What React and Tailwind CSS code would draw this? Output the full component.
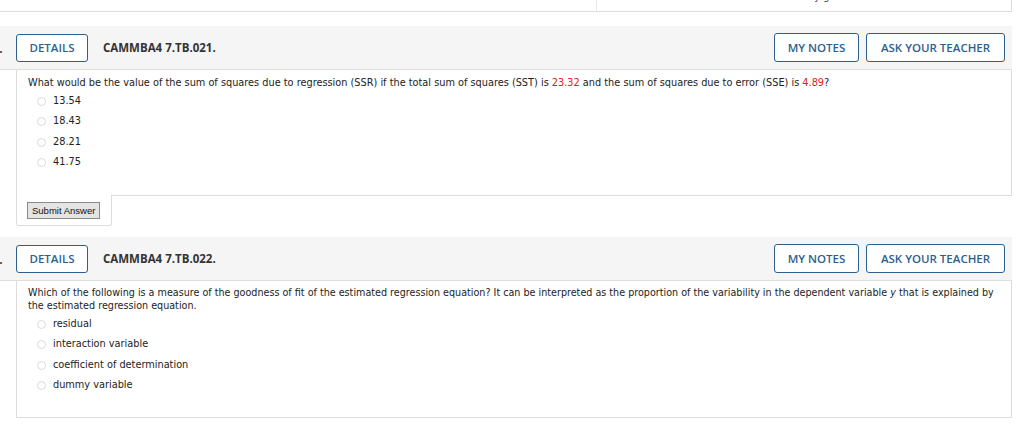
import React from "react";

const hdrFont = { fontFamily: '"Open Sans", "Noto Sans", sans-serif' };
const bodyFont = { fontFamily: '"DejaVu Sans", Verdana, sans-serif' };

function Radio({ label }) {
  return (
    <div className="flex items-center h-[20.5px] pl-[9px]">
      <span className="w-[9px] h-[9px] rounded-full border border-[#dadada] bg-white shrink-0" />
      <span className="ml-[7px] text-[9.75px] text-[#222]">{label}</span>
    </div>
  );
}

function Header({ num, code }) {
  return (
    <div
      className="h-[44px] bg-[#f5f5f5] border-b border-[#dedede] flex items-center relative overflow-hidden"
      style={hdrFont}
    >
      <span className="absolute left-[-14px] top-[14px] text-[11.5px] font-bold text-[#333]">{num}</span>
      <button className="ml-[16px] h-[28px] w-[72px] border border-[#2d5f8e] rounded-[3px] bg-white text-[#2d5f8e] text-[11.5px] font-semibold">
        DETAILS
      </button>
      <span className="ml-[15px] text-[11.5px] font-bold text-[#333]">{code}</span>
      <div className="ml-auto flex gap-[7px] mr-[7px]">
        <button className="h-[29px] w-[85px] border border-[#2d5f8e] rounded-[3px] bg-white text-[#2d5f8e] text-[11.5px] font-semibold">
          MY NOTES
        </button>
        <button className="h-[29px] w-[139px] border border-[#2d5f8e] rounded-[3px] bg-white text-[#2d5f8e] text-[11.5px] font-semibold">
          ASK YOUR TEACHER
        </button>
      </div>
    </div>
  );
}

export default function App() {
  return (
    <div className="w-[1024px] h-[444px] bg-white overflow-hidden">
      <div className="w-[1012px]">
        <div className="h-[12px] border-b border-r border-[#dcdcdc] flex overflow-hidden">
          <div className="w-[597px] border-r border-[#e6e6e6]" />
          <div className="flex-1 relative">
            <span className="absolute left-[12px] top-[-10px] text-[9.75px] text-[#444]" style={bodyFont}>
              confidence interval for the mean value of y given x
            </span>
          </div>
        </div>

        <div className="h-[14px]" />

        <Header num="21." code="CAMMBA4 7.TB.021." />
        <div style={bodyFont}>
          <div className="ml-[16px] border-l border-r border-[#dcdcdc] pl-[11px] pt-[6px] pb-[22px]">
            <p className="text-[9.75px] leading-[13px] text-[#222]">
              What would be the value of the sum of squares due to regression (SSR) if the total sum of squares (SST) is{" "}
              <span className="text-[#e0201b]">23.32</span> and the sum of squares due to error (SSE) is{" "}
              <span className="text-[#e0201b]">4.89</span>?
            </p>
            <div className="mt-[2px]">
              <Radio label="13.54" />
              <Radio label="18.43" />
              <Radio label="28.21" />
              <Radio label="41.75" />
            </div>
          </div>
          <div className="flex ml-[16px]">
            <div className="w-[96px] h-[31px] border-l border-r border-b border-[#dcdcdc] rounded-b-[3px] flex items-start pl-[10px] pt-[7px]">
              <button
                className="h-[17px] px-[4px] bg-[#e4e4e4] border border-[#8a8a8a] text-[9.5px] text-[#111] leading-none"
                style={{ fontFamily: '"Liberation Sans", Arial, sans-serif' }}
              >
                Submit Answer
              </button>
            </div>
            <div className="flex-1 border-t border-[#dcdcdc]" />
          </div>
        </div>

        <div className="h-[11px]" />

        <Header num="22." code="CAMMBA4 7.TB.022." />
        <div style={bodyFont}>
          <div className="ml-[16px] border-l border-r border-b border-[#dcdcdc] pl-[11px] pr-[3px] pt-[5px] h-[137px]">
            <p className="text-[9.6px] leading-[13px] text-[#222]">
              Which of the following is a measure of the goodness of fit of the estimated regression equation? It can be interpreted as the proportion of the variability in the dependent variable <i>y</i> that is explained by the estimated regression equation.
            </p>
            <div className="mt-[2px]">
              <Radio label="residual" />
              <Radio label="interaction variable" />
              <Radio label="coefficient of determination" />
              <Radio label="dummy variable" />
            </div>
          </div>
        </div>
      </div>
    </div>
  );
}
